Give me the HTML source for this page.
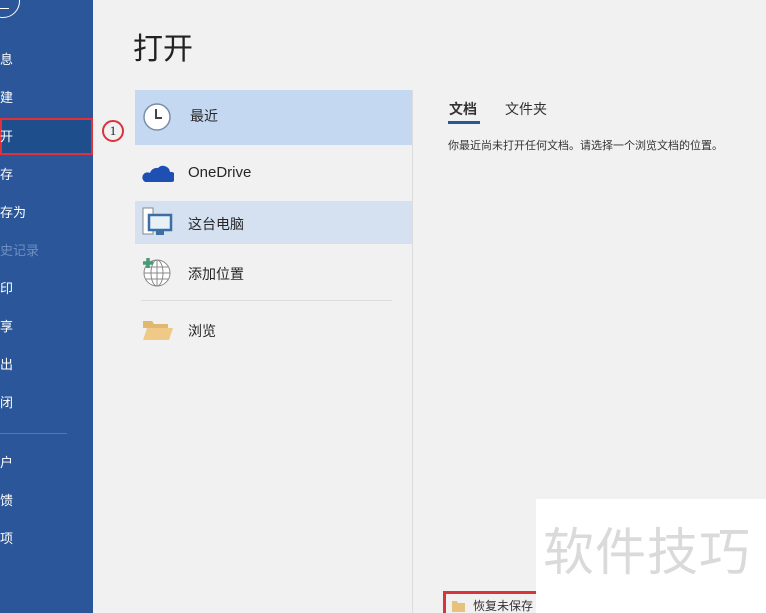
<!DOCTYPE html>
<html><head><meta charset="utf-8"><style>
*{margin:0;padding:0;box-sizing:border-box}
html,body{width:766px;height:613px;overflow:hidden}
body{background:#f1f1f1;font-family:"Liberation Sans","Noto Sans CJK SC",sans-serif;position:relative;color:#262626}
.side{position:absolute;left:0;top:0;width:93px;height:613px;background:#2b579a}
.si{position:absolute;left:0;color:#fff;font-size:13px;line-height:16px}
.abs{position:absolute}
</style></head><body>
<div class="side">
<div class="abs" style="left:-14px;top:-16px;width:34px;height:34px;border:1.5px solid #fff;border-radius:50%"></div>
<div class="abs" style="left:0px;top:8px;width:9px;height:1.2px;background:#fff"></div>
<div class="si" style="top:52px">息</div>
<div class="si" style="top:90px">建</div>
<div class="abs" style="left:0;top:118px;width:93px;height:37px;background:#1e4e8c;border:2px solid #e0303a"></div>
<div class="si" style="top:129px">开</div>
<div class="si" style="top:167px">存</div>
<div class="si" style="top:205px">存为</div>
<div class="si" style="top:243px;color:#6f8fc0">史记录</div>
<div class="si" style="top:281px">印</div>
<div class="si" style="top:319px">享</div>
<div class="si" style="top:357px">出</div>
<div class="si" style="top:395px">闭</div>
<div class="abs" style="left:0;top:433px;width:67px;height:1px;background:#5577aa"></div>
<div class="si" style="top:455px">户</div>
<div class="si" style="top:493px">馈</div>
<div class="si" style="top:531px">项</div>
</div>
<div class="abs" style="left:102px;top:120px;width:22px;height:22px;border:2px solid #d9333c;border-radius:50%;font:13px 'Liberation Serif',serif;text-align:center;line-height:18px;color:#222">1</div>
<div class="abs" style="left:133px;top:30px;font-size:30px;color:#222;line-height:40px">打开</div>
<div class="abs" style="left:135px;top:90px;width:277px;height:55px;background:#c5d8f2"></div>
<svg class="abs" style="left:142px;top:102px" width="30" height="30"><circle cx="15" cy="15" r="13" fill="#fff" stroke="#7a8fa8" stroke-width="1.5"/><path d="M14 7v9h6" stroke="#444" stroke-width="2" fill="none"/></svg>
<div class="abs" style="left:190px;top:106px;font-size:14px">最近</div>
<svg class="abs" style="left:141px;top:162px" width="33" height="22"><path d="M4 20h27a5 5 0 0 0-2-10 7 7 0 0 0-12-4 7 7 0 0 0-8 5 5 5 0 0 0-5 9z" fill="#1e50b4"/></svg>
<div class="abs" style="left:188px;top:164px;font-size:15px">OneDrive</div>
<div class="abs" style="left:135px;top:201px;width:277px;height:43px;background:#d5e1f1"></div>
<svg class="abs" style="left:142px;top:207px" width="32" height="32"><rect x="1" y="1" width="10" height="26" fill="#fff" stroke="#888"/><rect x="7" y="8" width="22" height="15" fill="#e8f0f8" stroke="#3a6ea5" stroke-width="2.5"/><rect x="14" y="24" width="8" height="4" fill="#3a6ea5"/></svg>
<div class="abs" style="left:188px;top:214px;font-size:14px">这台电脑</div>
<svg class="abs" style="left:141px;top:256px" width="32" height="32"><circle cx="16" cy="17" r="13" fill="#fff" stroke="#888"/><ellipse cx="16" cy="17" rx="6" ry="13" fill="none" stroke="#888"/><path d="M3 17h26M5 11h22M5 23h22M16 4v26" stroke="#888" fill="none"/><path d="M7 2v10M2 7h10" stroke="#4a9a7a" stroke-width="3.5"/></svg>
<div class="abs" style="left:188px;top:264px;font-size:14px">添加位置</div>
<div class="abs" style="left:141px;top:300px;width:251px;height:1px;background:#dcdcdc"></div>
<svg class="abs" style="left:142px;top:318px" width="32" height="24"><path d="M1 3h9l2 3h14v4H1z" fill="#e0b870"/><path d="M1 22l4-12h26l-4 12z" fill="#f0c987"/></svg>
<div class="abs" style="left:188px;top:321px;font-size:14px">浏览</div>
<div class="abs" style="left:412px;top:90px;width:1px;height:523px;background:#dcdcdc"></div>
<div class="abs" style="left:449px;top:99px;font-size:14px;font-weight:bold;color:#333">文档</div>
<div class="abs" style="left:448px;top:121px;width:32px;height:3px;background:#2b579a"></div>
<div class="abs" style="left:505px;top:99px;font-size:14px;color:#333">文件夹</div>
<div class="abs" style="left:448px;top:137px;font-size:11px;color:#333">你最近尚未打开任何文档。请选择一个浏览文档的位置。</div>
<div class="abs" style="left:443px;top:591px;width:110px;height:30px;border:3px solid #d9333c;background:#f1f1f1"></div>
<svg class="abs" style="left:451px;top:599px" width="16" height="13"><path d="M1 2h5l1 2h7v9H1z" fill="#e8c27c"/></svg>
<div class="abs" style="left:473px;top:597px;font-size:12px;color:#333">恢复未保存</div>
<div class="abs" style="left:536px;top:499px;width:230px;height:114px;background:#fff"></div>
<div class="abs" style="left:543px;top:520px;font-size:51px;color:#dadada;letter-spacing:1px;line-height:66px;white-space:nowrap">软件技巧</div>
</body></html>
